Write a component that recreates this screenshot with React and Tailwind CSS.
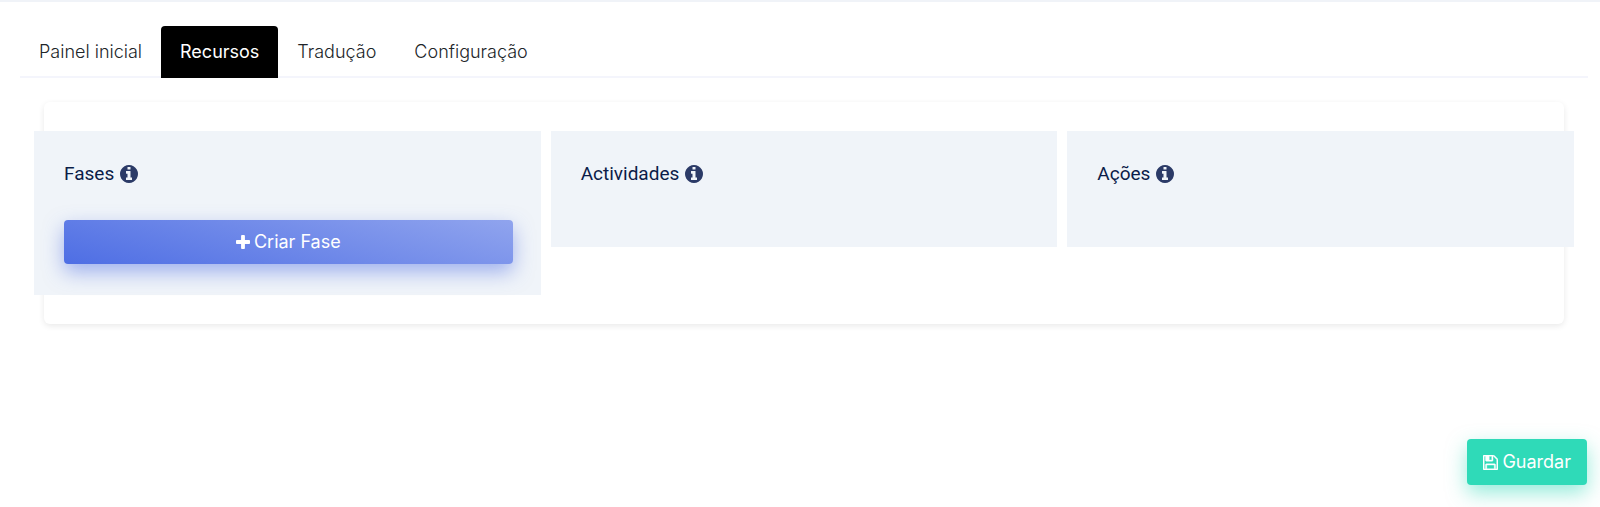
import { useState } from 'react';
import clsx from 'clsx';

const tabs = ['Painel inicial', 'Recursos', 'Tradução', 'Configuração'];

function PlusIcon({ className }) {
  return (
    <svg viewBox="192 128 1408 1408" fill="currentColor" aria-hidden="true" className={className}>
      <path d="M1600 736v192q0 40-28 68t-68 28h-416v416q0 40-28 68t-68 28h-192q-40 0-68-28t-28-68v-416h-416q-40 0-68-28t-28-68v-192q0-40 28-68t68-28h416v-416q0-40 28-68t68-28h192q40 0 68 28t28 68v416h416q40 0 68 28t28 68z" />
    </svg>
  );
}

function InfoIcon({ className }) {
  return (
    <svg viewBox="128 128 1536 1536" fill="currentColor" aria-hidden="true" className={className}>
      <path d="M1152 1376v-160q0-14-9-23t-23-9h-96v-512q0-14-9-23t-23-9h-320q-14 0-23 9t-9 23v160q0 14 9 23t23 9h96v320h-96q-14 0-23 9t-9 23v160q0 14 9 23t23 9h448q14 0 23-9t9-23zm-128-896v-160q0-14-9-23t-23-9h-192q-14 0-23 9t-9 23v160q0 14 9 23t23 9h192q14 0 23-9t9-23zm640 416q0 209-103 385.5t-279.5 279.5-385.5 103-385.5-103-279.5-279.5-103-385.5 103-385.5 279.5-279.5 385.5-103 385.5 103 279.5 279.5 103 385.5z" />
    </svg>
  );
}

function SaveIcon({ className }) {
  return (
    <svg
      viewBox="0 128 1536 1536"
      fill="currentColor"
      stroke="currentColor"
      strokeWidth="40"
      aria-hidden="true"
      className={className}
    >
      <path d="M384 1536h768v-384h-768v384zM1280 1536h128v-896q0-14-10-38.5t-20-34.5l-281-281q-10-10-34-20t-39-10v416q0 40-28 68t-68 28h-576q-40 0-68-28t-28-68v-416h-128v1280h128v-416q0-40 28-68t68-28h832q40 0 68 28t28 68v416zM896 608v-320q0-13-9.5-22.5t-22.5-9.5h-192q-13 0-22.5 9.5t-9.5 22.5v320q0 13 9.5 22.5t22.5 9.5h192q13 0 22.5-9.5t9.5-22.5zM1536 640v928q0 40-28 68t-68 28h-1344q-40 0-68-28t-28-68v-1344q0-40 28-68t68-28h928q40 0 88 20t76 48l280 280q28 28 48 76t20 88z" />
    </svg>
  );
}

function Column({ title, children }) {
  return (
    <section className="bg-[#f0f4f9] pl-[30px] pr-7 pt-[29px] pb-[31px]">
      <h2 className="flex items-center gap-1.5 h-7 mb-7 font-['Roboto',sans-serif] text-[19px] text-[#0b1c48]">
        {title}
        <InfoIcon className="size-[18px] text-[#2b3a67]" />
      </h2>
      {children}
    </section>
  );
}

export default function App() {
  const [active, setActive] = useState('Recursos');

  return (
    <div className="bg-white border-t-2 border-[#f0f3f8] font-['Inter',sans-serif]">
      <nav className="flex mt-6 ml-5 mr-3 border-b-2 border-[#f4f5fc]">
        {tabs.map((tab) => (
          <button
            key={tab}
            type="button"
            onClick={() => setActive(tab)}
            className={clsx(
              '-mb-0.5 h-13 px-[19px] text-lg rounded-t',
              active === tab ? 'bg-black text-white font-normal' : 'text-[#212529] font-light'
            )}
          >
            {tab}
          </button>
        ))}
      </nav>

      <main className="mt-6 ml-11 mr-9 py-[29px] rounded-md shadow-[0_2px_6px_rgba(0,0,0,0.09)]">
        <div className="grid grid-cols-3 items-start gap-2.5 -mx-2.5">
          <Column title="Fases">
            <button
              type="button"
              className="flex w-full h-11 mt-8 items-center justify-center gap-1 rounded bg-[linear-gradient(15deg,#4e6ee4,#90a4ee)] text-lg text-white shadow-[0_8px_20px_rgba(78,110,228,0.5)]"
            >
              <PlusIcon className="size-3.5" />
              Criar Fase
            </button>
          </Column>
          <Column title="Actividades" />
          <Column title="Ações" />
        </div>
      </main>

      <div className="flex justify-end mt-[115px] mr-[13px] pb-6">
        <button
          type="button"
          className="flex h-[46px] items-center gap-1 px-4 rounded bg-[#2fdab8] text-lg text-white shadow-[0_8px_20px_rgba(47,218,184,0.5)]"
        >
          <SaveIcon className="size-[15px]" />
          Guardar
        </button>
      </div>
    </div>
  );
}
